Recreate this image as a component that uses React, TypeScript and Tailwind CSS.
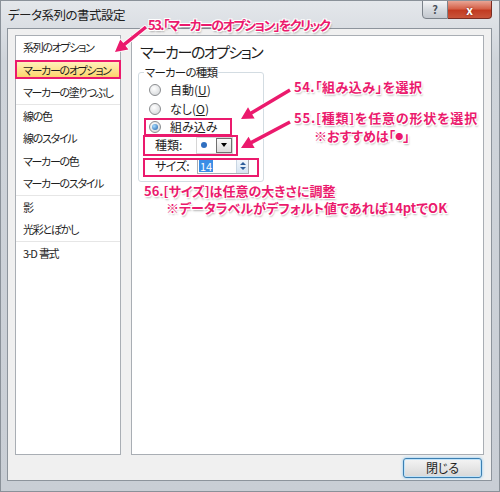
import React from 'react';

const PINK = '#eb1a6d';

const listItems: (string | null)[] = [
  '系列のオプション',
  'マーカーのオプション',
  'マーカーの塗りつぶし',
  null,
  '線の色',
  '線のスタイル',
  'マーカーの色',
  'マーカーのスタイル',
  null,
  '影',
  '光彩とぼかし',
  null,
  '3-D\u00a0\u00a0書式',
];

// arrow polygon from tail to tip
const arrowPoints = (x1: number, y1: number, x2: number, y2: number) => {
  const w = 3.5;
  const hl = 12;
  const hw = 6.5;
  const dx = x2 - x1;
  const dy = y2 - y1;
  const len = Math.hypot(dx, dy);
  const ux = dx / len;
  const uy = dy / len;
  const nx = -uy;
  const ny = ux;
  const bx = x2 - ux * hl;
  const by = y2 - uy * hl;
  const pts = [
    [x1 + (nx * w) / 2, y1 + (ny * w) / 2],
    [bx + (nx * w) / 2, by + (ny * w) / 2],
    [bx + nx * hw, by + ny * hw],
    [x2, y2],
    [bx - nx * hw, by - ny * hw],
    [bx - (nx * w) / 2, by - (ny * w) / 2],
    [x1 - (nx * w) / 2, y1 - (ny * w) / 2],
  ];
  return pts.map((p) => p.join(',')).join(' ');
};

const Radio: React.FC<{ checked?: boolean }> = ({ checked }) => (
  <span className="w-[12px] h-[12px] shrink-0 rounded-full border border-[#8b8d90] bg-[radial-gradient(circle_at_40%_35%,#ffffff,#cfd2d5)] flex items-center justify-center">
    {checked && <span className="w-[6px] h-[6px] rounded-full bg-[radial-gradient(circle_at_35%_35%,#a8dcff,#1d5ea8)]" />}
  </span>
);

const Note: React.FC<{ x: number; y: number; className?: string; children: React.ReactNode }> = ({ x, y, className = '', children }) => (
  <div
    className={`absolute whitespace-nowrap text-[13px] font-bold leading-[16px] text-[#eb1a6d] [text-shadow:-1px_-1px_0_#fff,1px_-1px_0_#fff,-1px_1px_0_#fff,1px_1px_0_#fff,1px_2px_2px_rgba(0,0,0,0.3)] ${className}`}
    style={{ left: x, top: y }}
  >
    {children}
  </div>
);

export default function App() {
  return (
    <div className="relative w-[500px] h-[492px] overflow-hidden flex flex-col border border-[#8a9199] bg-[linear-gradient(#e4e7eb,#cfd4da_60px,#c9ced5)] font-['Noto_Sans_CJK_JP','Noto_Sans',sans-serif] [font-feature-settings:'palt'] text-[#1e1e1e]">
      {/* title bar */}
      <div className="h-[27px] flex items-start justify-between pl-[7px] pr-[7px]">
        <span className="mt-[5px] text-[12.5px] leading-[18px] tracking-[-0.5px] text-[#202020]">データ系列の書式設定</span>
        <div className="flex -mt-[1px]">
          <div className="w-[26px] h-[19px] rounded-bl-[4px] border border-[#7b828a] bg-[linear-gradient(#f4f5f7,#d7dbe0_50%,#c3c8cf)] flex items-center justify-center text-[11px] font-bold text-[#4a5058]">
            ?
          </div>
          <div className="w-[44px] h-[19px] rounded-br-[4px] border border-l-0 border-[#7a2c22] bg-[linear-gradient(#e9a595,#d5624a_45%,#c23b22_55%,#c9553b)] flex items-center justify-center text-[12px] font-bold text-white [text-shadow:0_0_2px_#6a1a10]">
            x
          </div>
        </div>
      </div>

      {/* client area */}
      <div className="ml-[6px] mr-[7px] border border-[#8d949c] bg-[#f0f0f0] flex flex-col pt-[6px] pl-[7px] pr-[7px] pb-[2px]">
        <div className="flex h-[420px] gap-[10px]">
          {/* left list */}
          <div className="w-[106px] shrink-0 border border-[#a9aeb4] bg-white flex flex-col text-[11px] tracking-[-1.3px] whitespace-nowrap">
            {listItems.map((item, i) =>
              item === null ? (
                <div key={i} className="h-[1px] bg-[#e6e6e6]" />
              ) : item === 'マーカーのオプション' ? (
                <div key={i} className="h-[22.5px] flex items-center -mx-[1px]">
                  <div className="w-full h-[19px] border-2 border-[#eb1a6d] bg-[linear-gradient(#fff1bb,#fdd66c)] flex items-center pl-[6px] overflow-hidden">
                    {item}
                  </div>
                </div>
              ) : (
                <div key={i} className="h-[22.5px] flex items-center pl-[7px] overflow-hidden">
                  {item}
                </div>
              )
            )}
          </div>

          {/* right panel */}
          <div className="flex-1 border border-[#a9aeb4] bg-white flex flex-col pl-[6px]">
            <div className="mt-[6px] ml-[2px] text-[15px] leading-[20px] tracking-[-1.5px]">マーカーのオプション</div>
            <fieldset className="mt-[3px] w-[126px] border border-[#d3dce2] rounded-[3px] pt-[1px] pb-[5px] text-[12px]">
              <legend className="ml-[5px] px-[1px] text-[11.5px] leading-[14px] tracking-[-0.8px]">マーカーの種類</legend>
              <div className="h-[19px] flex items-center pl-[10px]">
                <Radio />
                <span className="ml-[9px]">
                  自動(<span className="underline">U</span>)
                </span>
              </div>
              <div className="h-[19px] flex items-center pl-[10px]">
                <Radio />
                <span className="ml-[9px]">
                  なし(<span className="underline">O</span>)
                </span>
              </div>
              <div className="h-[17px] flex items-center pl-[10px]">
                <Radio checked />
                <span className="ml-[9px]">組み込み</span>
              </div>
              <div className="h-[20px] flex items-center pl-[16px]">
                <span className="w-[41px]">種類:</span>
                <div className="w-[37px] h-[17px] border border-[#d6d6d6] bg-white flex items-center justify-between pl-[4px]">
                  <span className="w-[6px] h-[6px] rounded-full bg-[#2f6fc0]" />
                  <span className="w-[16px] h-[15px] border border-[#707070] bg-[linear-gradient(#fafafa,#dcdcdc)] flex items-center justify-center">
                    <span className="w-0 h-0 border-l-[3.5px] border-r-[3.5px] border-t-[4px] border-l-transparent border-r-transparent border-t-black" />
                  </span>
                </div>
              </div>
              <div className="mt-[1px] h-[20px] flex items-center pl-[16px]">
                <span className="w-[42px] tracking-[-0.5px]">サイズ:</span>
                <div className="w-[52px] h-[16px] border border-[#abadb3] bg-white flex items-center justify-between pl-[1px]">
                  <span className="text-[11px] leading-[12px] px-[1px] bg-[#3b8ee6] text-white">14</span>
                  <span className="w-[12px] h-[14px] border-l border-[#c9d6e3] bg-[linear-gradient(#f4f8fc,#d6e4f2)] flex flex-col items-center justify-center gap-[2px]">
                    <span className="w-0 h-0 border-l-[3px] border-r-[3px] border-b-[3px] border-l-transparent border-r-transparent border-b-[#2d5d9a]" />
                    <span className="w-0 h-0 border-l-[3px] border-r-[3px] border-t-[3px] border-l-transparent border-r-transparent border-t-[#2d5d9a]" />
                  </span>
                </div>
              </div>
            </fieldset>
          </div>
        </div>

        <div className="flex justify-end mt-[3px] pr-[2px]">
          <button className="w-[79px] h-[20px] rounded-[3px] border border-[#3c7fb1] shadow-[0_0_3px_#7cc3f2,inset_0_0_0_1px_#bfe3fa] bg-[linear-gradient(#f4f4f4,#e6e6e6_50%,#d8d8d8)] text-[12px] leading-[16px] text-[#1e1e1e]">
            閉じる
          </button>
        </div>
      </div>

      {/* annotations */}
      <svg className="absolute left-0 top-0 pointer-events-none" width="500" height="492">
        {[
          [145, 26, 114, 51],
          [289, 89, 240, 118],
          [289, 121, 240, 147],
        ].map(([a, b, c, d], i) => (
          <polygon
            key={i}
            points={arrowPoints(a, b, c, d)}
            fill={PINK}
            stroke="#fff"
            strokeWidth="1.5"
            strokeLinejoin="round"
            style={{ paintOrder: 'stroke' }}
          />
        ))}
      </svg>

      <div className="absolute left-[143px] top-[117px] w-[88px] h-[18px] border-2 border-[#eb1a6d]" />
      <div className="absolute left-[142px] top-[134px] w-[95px] h-[21px] border-2 border-[#eb1a6d]" />
      <div className="absolute left-[142px] top-[157px] w-[116px] h-[19px] border-2 border-[#eb1a6d]" />

      <Note x={147} y={16} className="tracking-[-1.5px]">53.「マーカーのオプション」をクリック</Note>
      <Note x={293} y={78} className="tracking-[0.5px]">54.「組み込み」を選択</Note>
      <Note x={293} y={109} className="tracking-[0.8px]">55.[種類]を任意の形状を選択</Note>
      <Note x={313} y={127}>
        ※おすすめは「<span className="text-[8px] align-middle">●</span>」
      </Note>
      <Note x={143} y={182}>56.[サイズ]は任意の大きさに調整</Note>
      <Note x={165} y={199}>※データラベルがデフォルト値であれば14ptでOK</Note>
    </div>
  );
}
